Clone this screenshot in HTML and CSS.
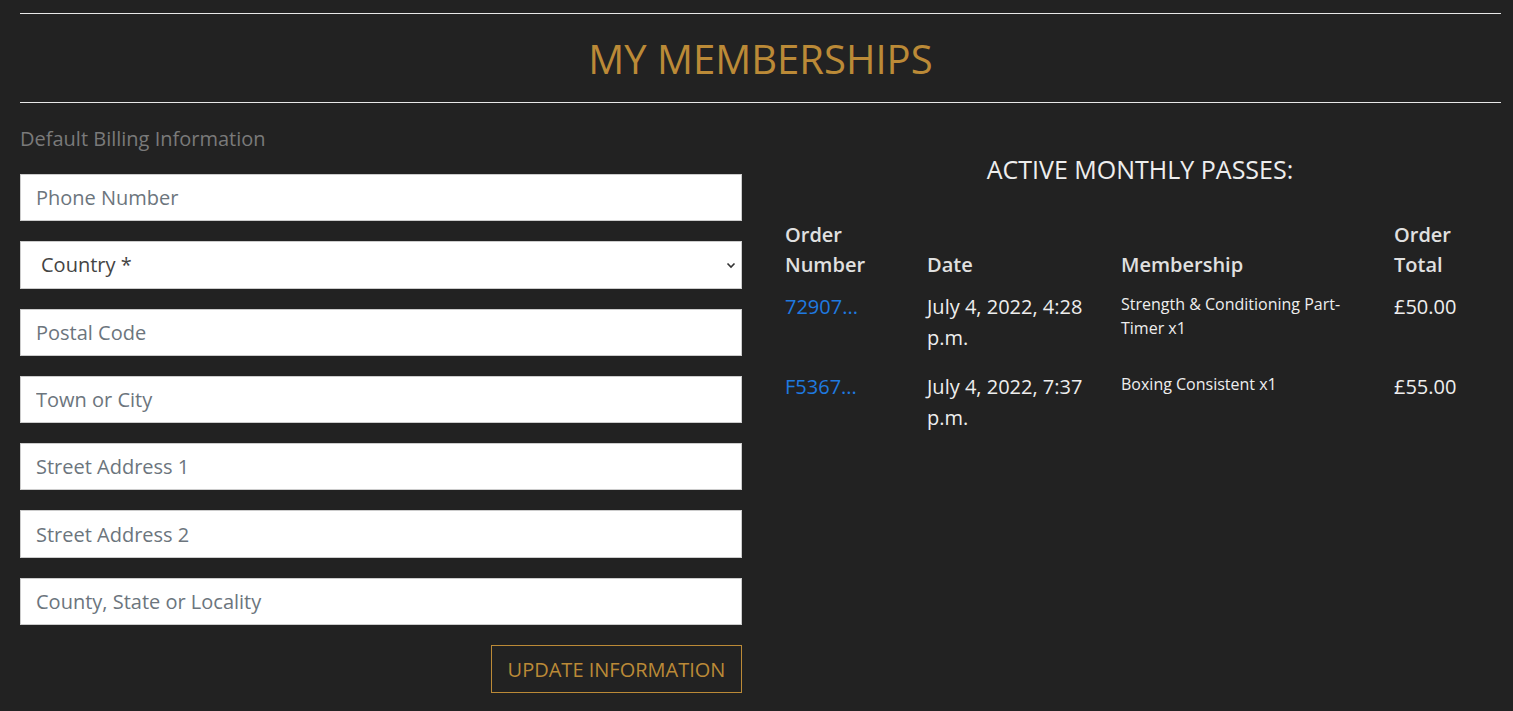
FILE: index.html
```html
<!DOCTYPE html>
<html>
<head>
<meta charset="utf-8">
<link rel="stylesheet" href="styles.css">
</head>
<body>
<div class="page">
  <hr class="rule">
  <h1 class="title">MY MEMBERSHIPS</h1>
  <hr class="rule">
  <div class="cols">
    <div class="left">
      <p class="label">Default Billing Information</p>
      <form class="form">
        <input class="field" placeholder="Phone Number">
        <div class="select">
          <span>Country *</span>
          <svg width="12" height="12" viewBox="0 0 12 12"><path d="M2.5 4.5 L6 8 L9.5 4.5" fill="none" stroke="#333" stroke-width="1.6"/></svg>
        </div>
        <input class="field" placeholder="Postal Code">
        <input class="field" placeholder="Town or City">
        <input class="field" placeholder="Street Address 1">
        <input class="field" placeholder="Street Address 2">
        <input class="field" placeholder="County, State or Locality">
        <div class="actions"><button type="button" class="btn">UPDATE INFORMATION</button></div>
      </form>
    </div>
    <div class="right">
      <h2 class="sub">ACTIVE MONTHLY PASSES:</h2>
      <table class="orders">
        <thead>
          <tr><th class="c1">Order<br>Number</th><th class="c2">Date</th><th class="c3">Membership</th><th class="c4">Order<br>Total</th></tr>
        </thead>
        <tbody>
          <tr><td><a href="#">72907...</a></td><td>July 4, 2022, 4:28 p.m.</td><td class="small">Strength &amp; Conditioning Part-Timer x1</td><td>£50.00</td></tr>
          <tr><td><a href="#">F5367...</a></td><td>July 4, 2022, 7:37 p.m.</td><td class="small">Boxing Consistent x1</td><td>£55.00</td></tr>
        </tbody>
      </table>
    </div>
  </div>
</div>
</body>
</html>
```
FILE: styles.css
```css
* { box-sizing: border-box; }
html, body { margin: 0; background: #222222; }
body { font-family: "Open Sans", sans-serif; color: #e6e6e6; }
.page { padding: 13px 12px 0 20px; }
.rule { border: 0; border-top: 1px solid #e8e8e8; margin: 0; }
.title {
  margin: 0; height: 88px; line-height: 90px;
  text-align: center; font-weight: 400; font-size: 40px;
  color: #bb8a37; letter-spacing: 0;
}
.cols { display: flex; }
.left { width: 722px; flex: none; }
.label { margin: 23px 0 22px; font-size: 20px; color: #7a7a7a; line-height: 26px; }
.form { display: flex; flex-direction: column; gap: 20px; }
.field, .select {
  height: 47.3px; width: 100%; border: 1px solid #ccc; background: #fff;
  font-family: "Open Sans", sans-serif; font-size: 20px; padding: 0 15px; color: #555;
  outline: none; flex: none;
}
.field::placeholder { color: #6c757d; }
.select { display: flex; align-items: center; justify-content: space-between; padding: 0 4px 0 20px; color: #444; }
.actions { display: flex; justify-content: flex-end; }
.btn {
  height: 48px; width: 251px; background: transparent; border: 1px solid #bb8a37;
  color: #bb8a37; font-family: "Open Sans", sans-serif; font-size: 20px; padding: 0;
}
.right { flex: 1; padding-left: 43px; }
.sub { margin: 51px 0 36px; text-align: center; font-weight: 400; font-size: 25px; color: #eee; line-height: 30px; padding-right: 6px; }
.orders { border-collapse: collapse; width: 100%; font-size: 20px; }
.orders th { text-align: left; vertical-align: bottom; font-weight: 600; line-height: 30px; padding: 0 0 11px; color: #e0e0e0; }
.c1 { width: 142px; } .c2 { width: 194px; } .c3 { width: 273px; }
.orders td { vertical-align: top; line-height: 31px; padding: 0 20px 18px 0; color: #eee; }
.orders td.small { font-size: 16px; line-height: 24px; padding-top: 1px; }
.orders a { color: #1f7ae0; text-decoration: none; }
```
